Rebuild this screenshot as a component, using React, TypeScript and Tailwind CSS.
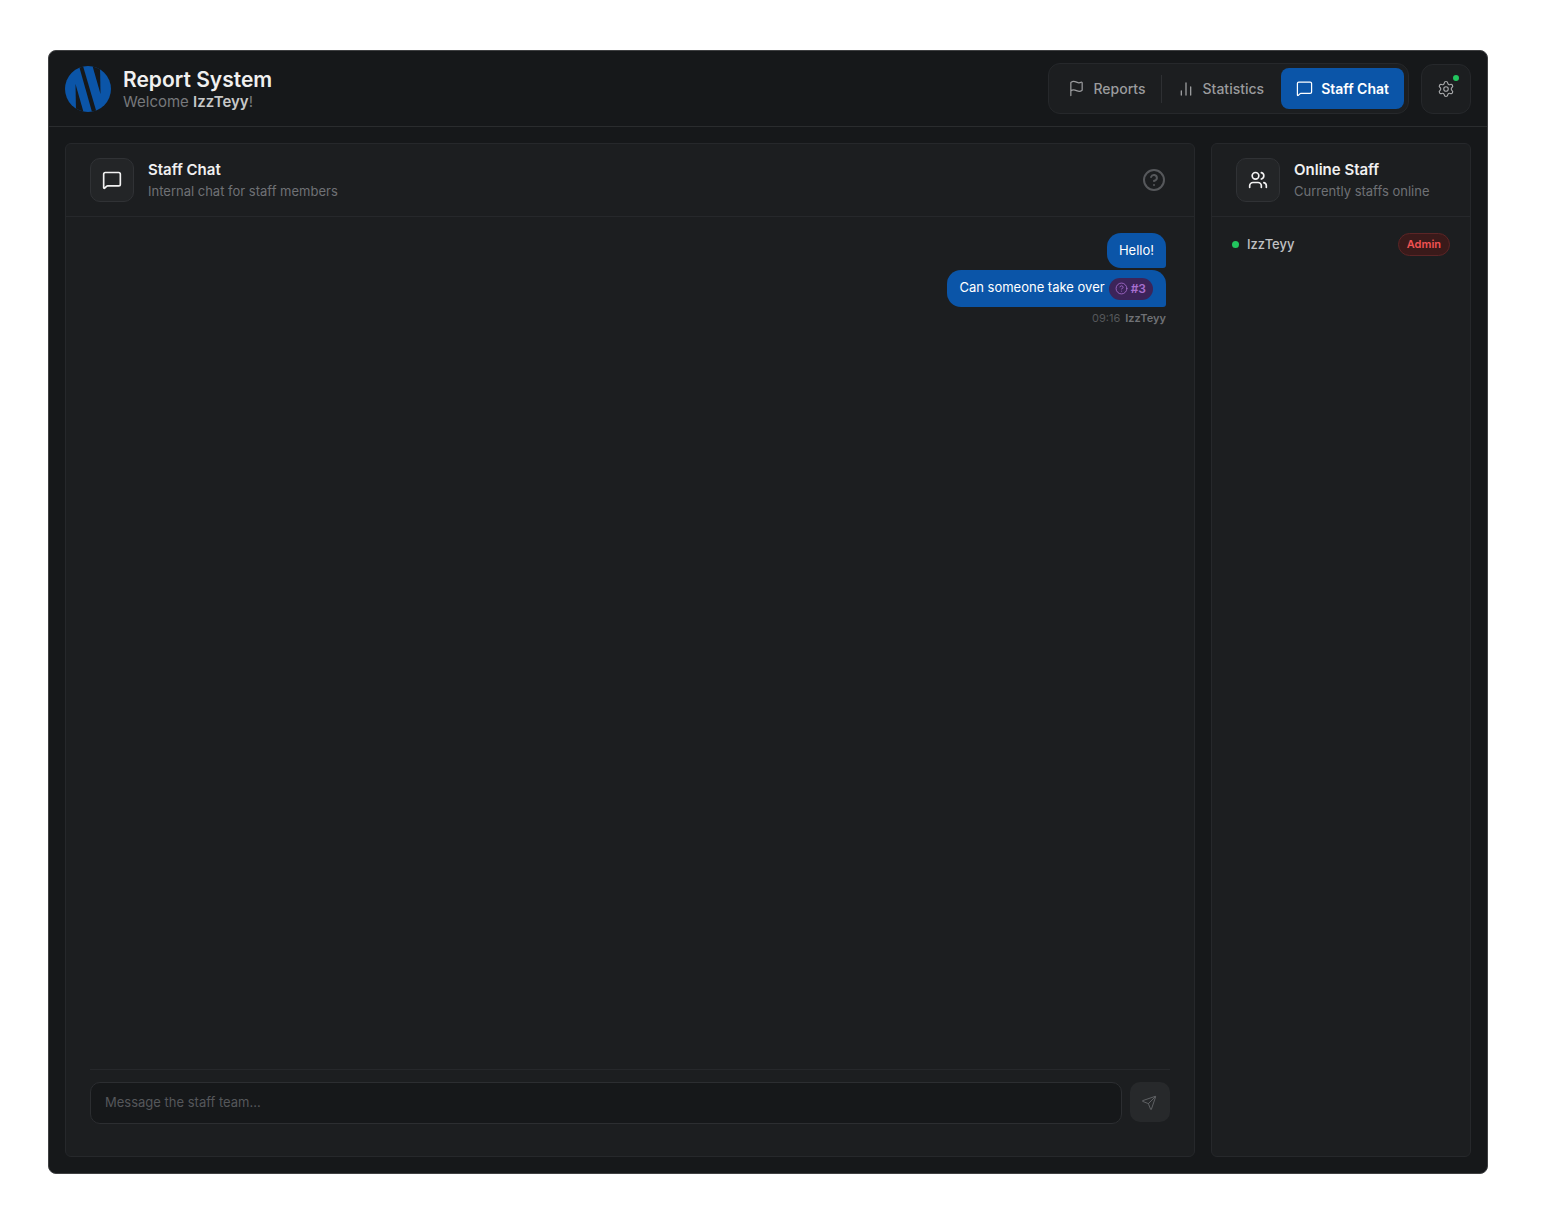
import React from 'react';
import { ChartNoAxesColumn, CircleHelp, Flag, MessageSquare, Send, Settings, Users } from 'lucide-react';

const Logo = () => (
  <svg width="46" height="46" viewBox="0 0 46 46" className="shrink-0">
    <defs>
      <clipPath id="logo-circle">
        <circle cx="23" cy="23" r="23" />
      </clipPath>
    </defs>
    <g clipPath="url(#logo-circle)">
      <rect width="46" height="46" fill="#0b55a8" />
      <path d="M14 0 L18 0 L31.5 46 L27 46 Z" fill="#16181a" />
      <path d="M10.5 18 L18.5 46 L11 46 Z" fill="#16181a" />
      <path d="M35.5 28 L27.5 0 L35 0 Z" fill="#16181a" />
    </g>
  </svg>
);

const IconBox = ({ children }: { children: React.ReactNode }) => (
  <div className="flex h-11 w-11 shrink-0 items-center justify-center rounded-[10px] border border-[#303235] bg-[#232527] text-[#f2f2f2]">
    {children}
  </div>
);

const PanelHeader = ({ icon, title, subtitle, right }: { icon: React.ReactNode; title: string; subtitle: string; right?: React.ReactNode }) => (
  <div className="flex h-[73px] shrink-0 items-center border-b border-[#26282b] pl-6 pr-7">
    <IconBox>{icon}</IconBox>
    <div className="ml-3.5 flex-1">
      <div className="text-[15px] leading-5 font-semibold text-[#f0f0f0]">{title}</div>
      <div className="mt-0.5 text-[13px] leading-[18px] text-[#6f7175]">{subtitle}</div>
    </div>
    {right}
  </div>
);

export default function App() {
  return (
    <div className="h-[1224px] bg-white pt-[50px] pr-[59px] pb-[50px] pl-[48px] font-['Inter',sans-serif]">
      <div className="flex h-full flex-col overflow-hidden rounded-lg border border-[#3f4042] bg-[#16181a]">
        <header className="flex h-[76px] shrink-0 items-center border-b border-[#2a2c2e] pr-4 pl-4">
          <Logo />
          <div className="ml-3 flex-1">
            <div className="text-[21px] leading-[26px] font-semibold text-[#f0f0f0]">Report System</div>
            <div className="text-[15px] leading-[17px] text-[#77797c]">
              Welcome <span className="font-semibold text-[#c8c8c8]">IzzTeyy</span>!
            </div>
          </div>
          <nav className="flex h-[51px] items-center rounded-xl border border-[#26282b] bg-[#1c1e20] pr-1 pl-1">
            <button className="flex h-[41px] items-center gap-2 pr-[15px] pl-[15px] text-sm font-medium text-[#9a9b9d]">
              <Flag size={17} strokeWidth={1.75} />
              Reports
            </button>
            <div className="h-7 w-px bg-[#2e3033]" />
            <button className="flex h-[41px] items-center gap-[9px] pr-[17px] pl-4 text-sm font-medium text-[#9a9b9d]">
              <ChartNoAxesColumn size={16} strokeWidth={2} />
              Statistics
            </button>
            <button className="flex h-[41px] items-center gap-2 rounded-lg bg-[#0b55a8] pr-[15px] pl-[15px] text-sm font-semibold text-white">
              <MessageSquare size={17} strokeWidth={1.75} />
              Staff Chat
            </button>
          </nav>
          <button className="relative ml-3 flex h-[50px] w-[50px] items-center justify-center rounded-xl border border-[#26282b] bg-[#1c1e20] text-[#a8a9ab]">
            <Settings size={18} strokeWidth={1.5} />
            <span className="absolute top-[10px] right-[11px] h-1.5 w-1.5 rounded-full bg-[#22c55e]" />
          </button>
        </header>
        <main className="flex min-h-0 flex-1 gap-4 p-4">
          <section className="flex min-w-0 flex-1 flex-col rounded-md border border-[#26282b] bg-[#1c1e20]">
            <PanelHeader
              icon={<MessageSquare size={20} strokeWidth={2} />}
              title="Staff Chat"
              subtitle="Internal chat for staff members"
              right={<CircleHelp size={24} strokeWidth={2} className="text-[#56585b]" />}
            />
            <div className="flex min-h-0 flex-1 flex-col items-end pt-4 pr-7 pl-6">
              <div className="rounded-[14px] rounded-br-[3px] bg-[#0b55a8] px-3 py-[9px] text-[13px] leading-[17px] text-white">Hello!</div>
              <div className="mt-0.5 flex h-[37px] items-center rounded-[14px] rounded-br-[3px] bg-[#0b55a8] pr-[13px] pl-3 text-[13px] text-white">
                <span className="-translate-y-px">Can someone take over</span>
                <span className="ml-1 flex h-[22px] items-center gap-[3px] rounded-full bg-[#3c2459] pr-[7px] pl-[6px] text-xs font-semibold text-[#a96fd0]">
                  <CircleHelp size={13} strokeWidth={1.5} />
                  #3
                </span>
              </div>
              <div className="mt-[5px] flex items-center gap-[5px] text-[11px] leading-[13px] text-[#55575a]">
                <span>09:16</span>
                <span className="font-semibold text-[#6f7175]">IzzTeyy</span>
              </div>
            </div>
            <div className="mr-6 ml-6 flex shrink-0 gap-2 border-t border-[#26282b] pt-3 pb-8">
              <div className="flex h-[42px] flex-1 items-center rounded-[10px] border border-[#2c2e31] bg-[#16181a] pl-[14px] text-[13px] text-[#55575a]">
                Message the staff team...
              </div>
              <button className="flex h-10 w-10 items-center justify-center rounded-[10px] bg-[#27292b] text-[#5f6164]">
                <Send size={16} strokeWidth={1.5} className="-translate-x-px translate-y-px" />
              </button>
            </div>
          </section>
          <aside className="flex w-[260px] shrink-0 flex-col rounded-md border border-[#26282b] bg-[#1c1e20]">
            <PanelHeader icon={<Users size={20} strokeWidth={2} />} title="Online Staff" subtitle="Currently staffs online" />
            <div className="flex items-center pt-4 pr-5 pl-5">
              <span className="h-[7px] w-[7px] rounded-full bg-[#22c55e]" />
              <span className="ml-2 flex-1 text-[13px] font-medium text-[#c0c1c3]">IzzTeyy</span>
              <span className="flex h-[23px] items-center rounded-full border border-[#5c2526] bg-[#3a1a1a] px-2 text-[11px] font-semibold text-[#f05252]">Admin</span>
            </div>
          </aside>
        </main>
      </div>
    </div>
  );
}
